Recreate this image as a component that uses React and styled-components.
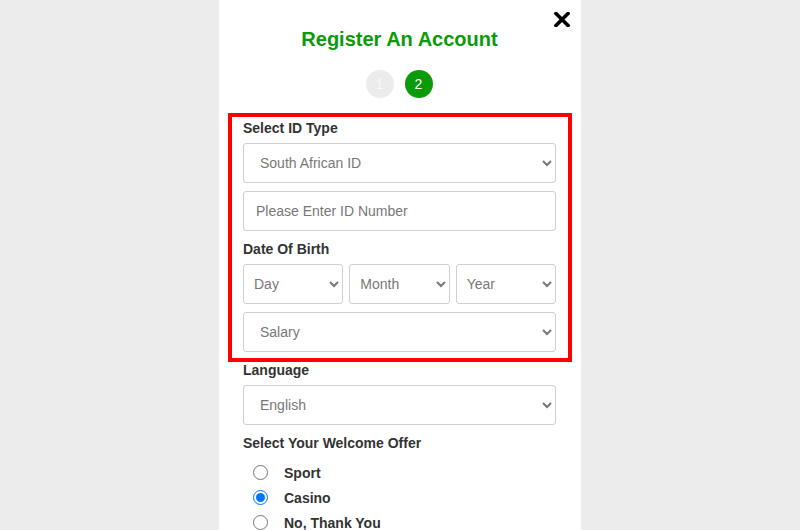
import React from 'react'
import styled, { createGlobalStyle } from 'styled-components'

const GlobalStyle = createGlobalStyle`
  html, body {
    margin: 0;
    padding: 0;
    background: #ececec;
    font-family: "Liberation Sans", Arial, sans-serif;
  }
`

const App = () => {
  return (
    <>
      <GlobalStyle />
      <Panel>
        <CloseButton aria-label="Close">
          <svg width="16" height="15" viewBox="0 0 16 15">
            <path d="M2 1.5 L14 13.5 M14 1.5 L2 13.5" stroke="#000" strokeWidth="3.6" strokeLinecap="square" />
          </svg>
        </CloseButton>
        <Title>Register An Account</Title>
        <Steps>
          <Step>1</Step>
          <Step active>2</Step>
        </Steps>

        <Highlight>
          <Label>Select ID Type</Label>
          <Select indent={12} defaultValue="sa">
            <option value="sa">South African ID</option>
            <option value="passport">Passport</option>
          </Select>
          <Input placeholder="Please Enter ID Number" />

          <Label top={10} bottom={7}>Date Of Birth</Label>
          <DateRow>
            <Select indent={6} defaultValue="">
              <option value="">Day</option>
            </Select>
            <Select indent={6} defaultValue="">
              <option value="">Month</option>
            </Select>
            <Select indent={6} defaultValue="">
              <option value="">Year</option>
            </Select>
          </DateRow>
          <Select indent={12} spaced defaultValue="">
            <option value="">Salary</option>
          </Select>
        </Highlight>

        <Label>Language</Label>
        <Select indent={12} defaultValue="en">
          <option value="en">English</option>
        </Select>

        <Label top={10} bottom={9}>Select Your Welcome Offer</Label>
        <RadioList>
          <RadioRow>
            <Radio type="radio" name="offer" />
            <span>Sport</span>
          </RadioRow>
          <RadioRow>
            <Radio type="radio" name="offer" defaultChecked />
            <span>Casino</span>
          </RadioRow>
          <RadioRow>
            <Radio type="radio" name="offer" />
            <span>No, Thank You</span>
          </RadioRow>
        </RadioList>
      </Panel>
    </>
  )
}

export default App

const Panel = styled.div`
  position: relative;
  width: 362px;
  height: 530px;
  margin: 0 auto;
  box-sizing: border-box;
  padding: 0 25px 0 24px;
  background: #fff;
  overflow: hidden;
`

const CloseButton = styled.button`
  position: absolute;
  top: 12px;
  right: 11px;
  padding: 0;
  border: 0;
  background: none;
  line-height: 0;
  cursor: pointer;
`

const Title = styled.h1`
  margin: 28px 0 0;
  font-size: 20px;
  line-height: 23px;
  font-weight: bold;
  color: #0a9a0a;
  text-align: center;
`

const Steps = styled.div`
  display: flex;
  justify-content: center;
  gap: 11px;
  margin-top: 19px;
  padding-right: 1px;
`

const Step = styled.div`
  width: 28px;
  height: 28px;
  border-radius: 50%;
  display: flex;
  align-items: center;
  justify-content: center;
  font-size: 14px;
  background: ${p => (p.active ? '#0a9a0a' : '#ececec')};
  color: ${p => (p.active ? '#fff' : '#fafafa')};
`

const Highlight = styled.div`
  margin: 15px -16px 0 -15px;
  padding: 3px 12px 6px 11px;
  border: 4px solid #ff0000;
`

const Label = styled.div`
  margin: ${p => p.top || 0}px 0 ${p => (p.bottom === undefined ? 7 : p.bottom)}px;
  font-size: 14px;
  line-height: 16px;
  font-weight: bold;
  color: #333;
`

const Select = styled.select`
  display: block;
  width: 100%;
  height: 40px;
  box-sizing: border-box;
  margin-top: ${p => (p.spaced ? 8 : 0)}px;
  padding: 0 8px 0 ${p => p.indent}px;
  border: 1px solid #d0d0d0;
  border-radius: 3px;
  background: #fff;
  font-family: "Liberation Sans", Arial, sans-serif;
  font-size: 14px;
  color: #777;
  outline: none;
`

const Input = styled.input`
  display: block;
  width: 100%;
  height: 40px;
  box-sizing: border-box;
  margin-top: 8px;
  padding: 0 12px;
  border: 1px solid #d0d0d0;
  border-radius: 3px;
  font-family: "Liberation Sans", Arial, sans-serif;
  font-size: 14px;
  color: #333;
  outline: none;

  &::placeholder {
    color: #777;
  }
`

const DateRow = styled.div`
  display: flex;
  gap: 6px;
`

const RadioList = styled.div`
  display: flex;
  flex-direction: column;
  padding-left: 10px;
`

const RadioRow = styled.label`
  display: flex;
  align-items: center;
  gap: 16px;
  height: 25px;
  font-size: 14px;
  font-weight: bold;
  color: #333;
`

const Radio = styled.input`
  width: 15px;
  height: 15px;
  margin: 0;
`
